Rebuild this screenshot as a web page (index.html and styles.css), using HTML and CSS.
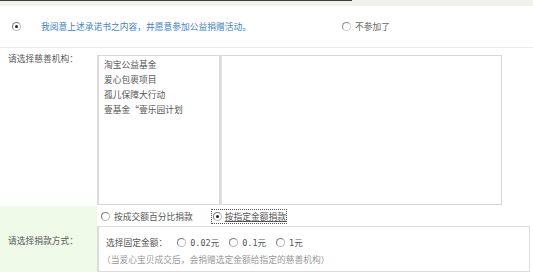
FILE: index.html
```html
<!DOCTYPE html>
<html>
<head>
<meta charset="utf-8">
<link rel="stylesheet" href="styles.css">
</head>
<body>
<div class="page">
  <div class="topstrip"><div class="topline"></div></div>
  <div class="agree">
    <label class="opt agree-yes"><span class="radio on"></span><span class="agree-text">我阅意上述承诺书之内容，并愿意参加公益捐赠活动。</span></label>
    <label class="opt agree-no"><span class="radio"></span><span class="no-text">不参加了</span></label>
  </div>
  <div class="row org">
    <div class="label">请选择慈善机构：</div>
    <div class="boxes">
      <div class="listbox">
        <div class="item">淘宝公益基金</div>
        <div class="item">爱心包裹项目</div>
        <div class="item">孤儿保障大行动</div>
        <div class="item">壹基金“壹乐园计划</div>
      </div>
      <div class="detail"></div>
    </div>
  </div>
  <div class="row method">
    <div class="label green">请选择捐款方式：</div>
    <div class="method-body">
      <div class="modes">
        <label class="opt"><span class="radio"></span><span>按成交额百分比捐款</span></label>
        <label class="opt focus"><span class="radio on"></span><span class="ul">按指定金额捐款</span></label>
      </div>
      <div class="amount-box">
        <div class="amounts">
          <span class="amt-label">选择固定金额：</span>
          <label class="opt"><span class="radio"></span><span>0.02元</span></label>
          <label class="opt"><span class="radio"></span><span>0.1元</span></label>
          <label class="opt"><span class="radio"></span><span>1元</span></label>
        </div>
        <div class="note">（当爱心宝贝成交后，会捐赠选定金额给指定的慈善机构）</div>
      </div>
    </div>
  </div>
</div>
</body>
</html>
```
FILE: styles.css
```css
html, body {
  margin: 0;
  padding: 0;
  background: #fff;
}
.page {
  width: 533px;
  height: 279px;
  overflow: hidden;
  font-family: "Noto Sans CJK SC", "Liberation Sans", sans-serif;
  font-size: 8.75px;
  color: #555;
}
.topstrip {
  height: 6px;
  background: #f1f1ed;
}
.topline {
  width: 352px;
  height: 1px;
  background: #3d3d3a;
}
.agree {
  height: 42px;
  display: flex;
  align-items: center;
  border-bottom: 1px solid #ececec;
  box-sizing: border-box;
  padding-left: 12px;
}
.opt {
  display: inline-flex;
  align-items: center;
  gap: 4px;
  white-space: nowrap;
}
.radio {
  width: 7px;
  height: 7px;
  border-radius: 50%;
  border: 1px solid #b8b8b8;
  border-top-color: #7a7a7a;
  border-left-color: #7a7a7a;
  background: #fff;
  position: relative;
  flex: none;
}
.radio.on::after {
  content: "";
  position: absolute;
  left: 2px;
  top: 2px;
  width: 3px;
  height: 3px;
  border-radius: 50%;
  background: #222;
}
.agree-yes {
  gap: 20px;
  width: 330px;
}
.agree-text {
  color: #3f83c3;
}
.agree-no .radio {
  border-color: #d0d0d0;
  border-top-color: #8a8a8a;
  border-left-color: #8a8a8a;
}
.no-text {
  color: #666;
}
.row {
  display: flex;
}
.label {
  width: 97px;
  flex: none;
  box-sizing: border-box;
  padding-left: 8px;
  color: #5a5a5a;
}
.org {
  height: 158px;
}
.org .label {
  padding-top: 4px;
}
.boxes {
  display: flex;
  padding-top: 7px;
}
.listbox {
  width: 123px;
  height: 150px;
  box-sizing: border-box;
  border: 1px solid #d6d6d6;
  border-left-width: 2px;
  border-left-color: #dcdcdc;
  padding: 1px 0 0 5px;
  color: #555;
}
.item {
  height: 15px;
  line-height: 15px;
}
.detail {
  width: 282px;
  height: 150px;
  box-sizing: border-box;
  border: 1px solid #d6d6d6;
  border-left: 2px solid #e0e0e0;
}
.method {
  height: 66px;
}
.label.green {
  background: #effae8;
  display: flex;
  align-items: center;
  padding-top: 2px;
  width: 97px;
}
.method-body {
  display: flex;
  flex-direction: column;
}
.modes {
  height: 20px;
  display: flex;
  align-items: center;
  gap: 19px;
  padding-left: 4px;
}
.focus {
  outline: 1px dotted #555;
  outline-offset: 0;
  gap: 3px;
  padding-left: 1px;
}
.ul {
  text-decoration: underline;
  color: #555;
}
.amount-box {
  width: 433px;
  height: 46px;
  box-sizing: border-box;
  border: 1px solid #dcdcdc;
  border-left-width: 2px;
  padding: 7px 0 0 7px;
}
.amounts {
  display: flex;
  align-items: center;
  gap: 10px;
  height: 16px;
}
.amounts .opt {
  font-family: "DejaVu Sans Mono", "Noto Sans CJK SC", monospace;
  font-size: 8.5px;
}
.note {
  color: #9a9a9a;
  margin-top: 3px;
  margin-left: -4px;
}
```
